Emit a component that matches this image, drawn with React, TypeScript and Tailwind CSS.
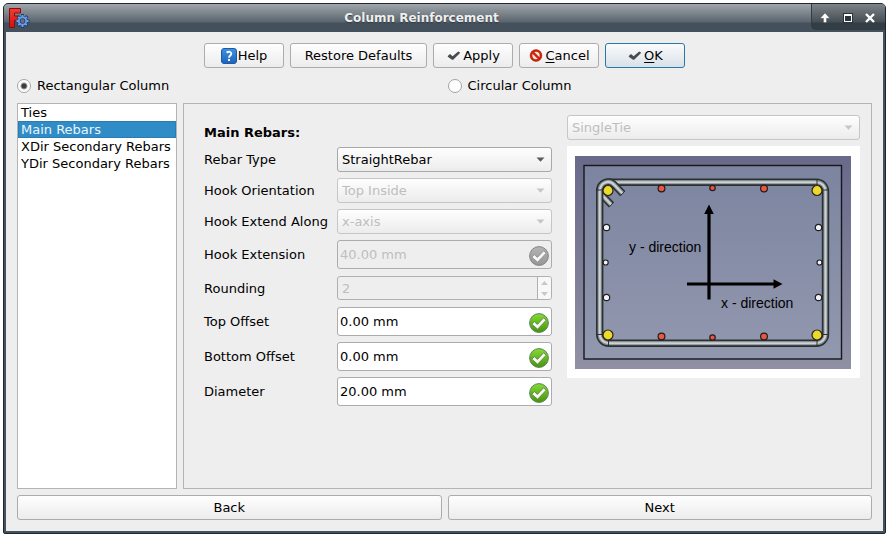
import { useState } from "react";
import type { ReactNode } from "react";

const raised = "rounded-[3px] border bg-linear-to-b from-[#fefefe] to-[#ececec]";

const gearTeeth = "M14.500 8V20M8.500 14H20.500M10.300 9.800L18.700 18.200M18.700 9.800L10.300 18.200";

function FreeCadIcon() {
  return (
    <svg className="h-[22px] w-[24px]" viewBox="0 0 24 22" aria-hidden="true">
      <defs>
        <linearGradient id="fRed" x1="0" y1="0" x2="0" y2="1">
          <stop offset="0" stopColor="#fa3a30" />
          <stop offset="1" stopColor="#d01014" />
        </linearGradient>
      </defs>
      <path d="M1.500 1.500H12.500V6H6.500V9H10.500V13.500H6.500V20.500H1.500Z" fill="url(#fRed)" stroke="#7a1214" strokeWidth="1" />
      <path d="M14.500 7V21M7.500 14H21.500M9.600 9.100L19.400 18.900M19.400 9.100L9.600 18.900" stroke="#1c3a78" strokeWidth="3" />
      <circle cx="14.500" cy="14" r="5.200" fill="#1c3a78" />
      <path d={gearTeeth} stroke="#78a8e8" strokeWidth="1.800" />
      <circle cx="14.500" cy="14" r="4.700" fill="#6a9ade" />
      <circle cx="14.500" cy="14" r="2.700" fill="#1c3a78" />
      <circle cx="14.500" cy="14" r="2" fill="#66727e" />
    </svg>
  );
}

function TickIcon() {
  return (
    <svg className="size-4" viewBox="0 0 16 16" aria-hidden="true">
      <path d="M1.800 8L4 6L6.600 8.200L12.200 3.400L13.800 4.200V5.200L7.200 11.800H6L1.800 8.800Z" fill="#484a4b" />
    </svg>
  );
}

function HelpIcon() {
  return (
    <svg className="size-4" viewBox="0 0 16 16" aria-hidden="true">
      <defs>
        <linearGradient id="helpBlue" x1="0" y1="0" x2="0" y2="1">
          <stop offset="0" stopColor="#3b92e6" />
          <stop offset="1" stopColor="#1f63b8" />
        </linearGradient>
      </defs>
      <rect x="0.500" y="0.500" width="15" height="15" rx="2.500" fill="url(#helpBlue)" stroke="#1d5aa6" />
      <path d="M5.600 4.600C7.500 3.300 10.300 3.600 10.300 5.700C10.300 7.500 8 7.600 8 9.800" fill="none" stroke="#fff" strokeWidth="1.900" />
      <rect x="7" y="11" width="2" height="2" fill="#fff" />
    </svg>
  );
}

function ForbidIcon() {
  return (
    <svg className="size-4" viewBox="0 0 16 16" aria-hidden="true">
      <circle cx="8" cy="7.500" r="4.800" fill="#f8e6e2" stroke="#cf2208" strokeWidth="2.300" />
      <path d="M4.600 4.200L11.400 10.800" stroke="#cf2208" strokeWidth="2.400" />
      <circle cx="8" cy="7.500" r="5.900" fill="none" stroke="#9a1606" strokeWidth="0.500" />
    </svg>
  );
}

function ValidIcon({ muted = false }: { muted?: boolean }) {
  const id = muted ? "validGrey" : "validGreen";
  return (
    <svg className="pointer-events-none absolute right-[3px] bottom-[3px] size-5" viewBox="0 0 20 20" aria-hidden="true">
      <defs>
        <linearGradient id={id} x1="0" y1="0" x2="0" y2="1">
          <stop offset="0" stopColor={muted ? "#b4b4b4" : "#86dc34"} />
          <stop offset="1" stopColor={muted ? "#969696" : "#479408"} />
        </linearGradient>
      </defs>
      <circle cx="10" cy="10" r="9.400" fill={`url(#${id})`} stroke={muted ? "#858585" : "#5f8263"} />
      <path d="M2.800 11.200L5.400 8.600L8.400 11.400L14.600 4.800L17.200 7.200L8.600 16.200Z" fill="#f6f6f4" stroke={muted ? "#858585" : "#4d7c34"} strokeWidth="0.800" />
    </svg>
  );
}

function DialogButton({ children, wide = false, primary = false }: { children: ReactNode; wide?: boolean; primary?: boolean }) {
  return (
    <button
      type="button"
      className={`flex h-[25px] items-center justify-center gap-px rounded-[3px] border bg-linear-to-b ${
        primary ? "border-[#2c76a6] from-[#fafbfc] to-[#d8e1e8]" : "border-[#acacac] from-[#fefefe] to-[#ececec]"
      } ${wide ? "w-[137px]" : "w-[80px]"}`}
    >
      {children}
    </button>
  );
}

function Combo({ id, value, options, disabled = false }: { id: string; value: string; options: string[]; disabled?: boolean }) {
  return (
    <div className="relative">
      <select
        id={id}
        aria-label={id === "ties" ? "Tie type" : undefined}
        defaultValue={value}
        disabled={disabled}
        className={`block h-[25px] w-full appearance-none pl-1 opacity-100 ${raised} ${
          disabled ? "border-[#c6c6c6] text-[#bebebe]" : "border-[#a8a8a8] text-black"
        }`}
      >
        {options.map((o) => (
          <option key={o}>{o}</option>
        ))}
      </select>
      <svg className="pointer-events-none absolute top-[10px] right-[7px] h-[5px] w-[9px]" viewBox="0 0 9 5" aria-hidden="true">
        <path d="M0.500 0.500H8.500L4.500 4.700Z" fill={disabled ? "#c6c6c6" : "#5a5a5a"} />
      </svg>
    </div>
  );
}

function Quantity({ id, value, disabled = false }: { id: string; value: string; disabled?: boolean }) {
  return (
    <div className="relative">
      <input
        id={id}
        type="text"
        defaultValue={value}
        disabled={disabled}
        className={`block h-[29px] w-full rounded-[3px] border border-[#acacac] pl-[2px] ${
          disabled ? "bg-[#eeeeee] text-[#bebebe]" : "bg-white text-black"
        }`}
      />
      <ValidIcon muted={disabled} />
    </div>
  );
}

function Field({ id, label, children }: { id: string; label: string; children: ReactNode }) {
  return (
    <div className="grid grid-cols-[133px_1fr] items-center">
      <label htmlFor={id}>{label}</label>
      {children}
    </div>
  );
}

function ColumnRadio({ label, checked, onChange }: { label: string; checked: boolean; onChange: () => void }) {
  return (
    <label className="flex flex-1 items-center gap-[6px]">
      <input
        type="radio"
        name="columnType"
        checked={checked}
        onChange={onChange}
        className="size-[14px] appearance-none rounded-full border border-[#a4a4a4] bg-white checked:bg-[radial-gradient(circle,#3c3c3c_2px,#ffffff_4px)]"
      />
      {label}
    </label>
  );
}

const yellow = [[33, 34.5], [242, 34.5], [33, 179], [242, 179]];
const red = [[86.5, 32.5, 3.4], [137.5, 32, 2.7], [189, 32.5, 3.4], [86.5, 180.5, 3.4], [137.5, 181.5, 2.7], [189, 180.5, 3.4]];
const white = [[31.5, 71.5, 3.2], [30.7, 106.5, 2.5], [31.5, 141.5, 3.2], [243.5, 71.5, 3.2], [244.5, 106.5, 2.5], [243.5, 141.5, 3.2]];
const tube = [
  { color: "#2a3135", width: 7.4 },
  { color: "#858c90", width: 4.2 },
  { color: "#cdd1d3", width: 2.1 },
];

function ColumnDiagram() {
  return (
    <svg className="block w-full" viewBox="0 0 276 213" role="img" aria-label="Column cross section">
      <defs>
        <linearGradient id="outer" x1="0" y1="0" x2="0" y2="1">
          <stop offset="0" stopColor="#69698a" />
          <stop offset="1" stopColor="#9090a5" />
        </linearGradient>
        <linearGradient id="inner" x1="0" y1="0" x2="0" y2="1">
          <stop offset="0" stopColor="#7c84a0" />
          <stop offset="1" stopColor="#9298ae" />
        </linearGradient>
      </defs>
      <rect width="276" height="213" fill="url(#outer)" />
      <rect x="9" y="9.500" width="257.500" height="193.500" fill="url(#inner)" stroke="#15171c" strokeWidth="1.400" />
      {tube.map((t) => (
        <path key={t.color} d="M26 38L36.300 48.700" fill="none" stroke={t.color} strokeWidth={t.width} />
      ))}
      {tube.map((t) => (
        <rect key={t.color} x="24.700" y="26.200" width="225.800" height="161" rx="9" fill="none" stroke={t.color} strokeWidth={t.width} />
      ))}
      {tube.map((t) => (
        <path key={t.color} d="M24.700 36C24.700 25.500 34.500 23.500 39.500 29L47.600 37.500" fill="none" stroke={t.color} strokeWidth={t.width} />
      ))}
      <path
        d="M21.500 34H28M242 23V30M247 34H254M21.500 178.500H28M33.500 184V190.500M242 184V190.500M247 178.500H254M45.200 40L50 35M34 51.200L38.700 46.300"
        stroke="#2b3236"
        strokeWidth="1"
      />
      {yellow.map(([x, y]) => (
        <circle key={`${x}-${y}`} cx={x} cy={y} r="5" fill="#ecd92c" stroke="#26251a" strokeWidth="1.200" />
      ))}
      {red.map(([x, y, r]) => (
        <circle key={`${x}-${y}`} cx={x} cy={y} r={r} fill="#ea5740" stroke="#221c1e" strokeWidth="1.200" />
      ))}
      {white.map(([x, y, r]) => (
        <circle key={`${x}-${y}`} cx={x} cy={y} r={r} fill="#f2f2f2" stroke="#1c1e22" strokeWidth="1.200" />
      ))}
      <path d="M134 143.500V57M112 128H199" stroke="#000" strokeWidth="3.200" />
      <path d="M134 48.500L138.800 58H129.200ZM207.500 128L198.500 123.200V132.800Z" fill="#000" />
      <g className="font-['Liberation_Sans',sans-serif] text-[14px]" fill="#000">
        <text x="54" y="96">y - direction</text>
        <text x="146" y="152">x - direction</text>
      </g>
    </svg>
  );
}

const sections = ["Ties", "Main Rebars", "XDir Secondary Rebars", "YDir Secondary Rebars"];

export default function App() {
  const [rectangular, setRectangular] = useState(true);
  const [section, setSection] = useState("Main Rebars");

  return (
    <div className="flex min-h-screen flex-col bg-white pt-[3px] pr-[2px] pb-[3px] pl-[3px] font-['DejaVu_Sans',sans-serif] text-[13px] leading-[17px] text-black">
      <div className="flex flex-1 flex-col rounded-t-[5px] rounded-b-[2px] border border-[#1f272f] bg-[#44525f]">
        <header className="flex h-[28px] rounded-t-[4px] bg-[linear-gradient(#a0a6ab_0px,#5a656e_18px,#44505c_19px,#44505c_28px)]">
          <div className="w-[28px] pt-[3px] pl-1">
            <FreeCadIcon />
          </div>
          <h1 className="flex-1 pt-[6px] text-center text-[12px] font-bold text-[#eeeeee] [text-shadow:0_1px_1px_#30383f]">Column Reinforcement</h1>
          <div className="flex h-[26px] w-[74px] items-center justify-between rounded-tr-[4px] rounded-bl-[5px] border-b border-l border-[#323c43] bg-[linear-gradient(#7d8388_0px,#454f55_18px,#333e44_19px)] pt-[2px] pr-2 pl-[6px]">
            <button type="button" aria-label="Roll up">
              <svg className="size-[14px]" viewBox="0 0 14 14" aria-hidden="true">
                <path d="M7 2L11.800 7.300H8.500V11.500H5.500V7.300H2.200Z" fill="#fff" stroke="#2a3237" strokeWidth="0.300" />
              </svg>
            </button>
            <button type="button" aria-label="Maximize">
              <svg className="size-[14px]" viewBox="0 0 14 14" aria-hidden="true">
                <rect x="2" y="2" width="10" height="10" fill="#2a3237" />
                <path d="M3 3H11V11H3ZM4 5V10H10V5Z" fill="#fff" fillRule="evenodd" />
              </svg>
            </button>
            <button type="button" aria-label="Close">
              <svg className="size-[14px]" viewBox="0 0 14 14" aria-hidden="true">
                <path d="M3 3L11 11M11 3L3 11" stroke="#fff" strokeWidth="2.400" />
              </svg>
            </button>
          </div>
        </header>

        <main className="mx-[2px] mb-[2px] flex flex-1 flex-col bg-[#eeeeee] p-[11px]">
          <div className="flex justify-center gap-[6px]">
            <DialogButton><HelpIcon />Help</DialogButton>
            <DialogButton wide>Restore Defaults</DialogButton>
            <DialogButton><TickIcon />Apply</DialogButton>
            <DialogButton>
              <ForbidIcon />
              <span><u className="underline-offset-2">C</u>ancel</span>
            </DialogButton>
            <DialogButton primary>
              <TickIcon />
              <span><u className="underline-offset-2">O</u>K</span>
            </DialogButton>
          </div>

          <div className="mt-[6px] flex h-[23px] gap-[6px]">
            <ColumnRadio label="Rectangular Column" checked={rectangular} onChange={() => setRectangular(true)} />
            <ColumnRadio label="Circular Column" checked={!rectangular} onChange={() => setRectangular(false)} />
          </div>

          <div className="mt-[6px] flex flex-1 gap-[6px]">
            <ul className="w-[160px] shrink-0 border border-[#b4b4b4] bg-white">
              {sections.map((s) => (
                <li key={s}>
                  <button
                    type="button"
                    onClick={() => setSection(s)}
                    className={`block h-[17px] w-full pl-[3px] text-left whitespace-nowrap ${
                      s === section ? "bg-[#308cc6] text-[#eaf4fa] inset-ring inset-ring-[#2a7db2]" : ""
                    }`}
                  >
                    {s}
                  </button>
                </li>
              ))}
            </ul>

            <section className="flex flex-1 items-start gap-[15px] border border-[#b4b4b4] pt-[11px] pr-[11px] pl-5">
              <form className="flex flex-1 flex-col gap-[6px] pt-[9px]">
                <h2 className="font-bold">Main Rebars:</h2>
                <Field id="rebarType" label="Rebar Type">
                  <Combo id="rebarType" value="StraightRebar" options={["StraightRebar", "LShapeRebar"]} />
                </Field>
                <Field id="hookOrientation" label="Hook Orientation">
                  <Combo id="hookOrientation" value="Top Inside" options={["Top Inside"]} disabled />
                </Field>
                <Field id="hookAlong" label="Hook Extend Along">
                  <Combo id="hookAlong" value="x-axis" options={["x-axis", "y-axis"]} disabled />
                </Field>
                <Field id="hookExtension" label="Hook Extension">
                  <Quantity id="hookExtension" value="40.00 mm" disabled />
                </Field>
                <Field id="rounding" label="Rounding">
                  <div className="my-px flex h-[24px] rounded-[3px] border border-[#b0b0b0]">
                    <input id="rounding" type="text" inputMode="numeric" defaultValue="2" disabled className="min-w-0 flex-1 bg-transparent pl-1 text-[#bebebe]" />
                    <div className="flex w-[14px] flex-col rounded-r-[2px] border-l border-[#b0b0b0] bg-[#f8f8f8]">
                      <button type="button" aria-label="Increase" disabled className="flex flex-1 items-center justify-center">
                        <svg className="h-1 w-[7px]" viewBox="0 0 7 4" aria-hidden="true"><path d="M0 4H7L3.500 0Z" fill="#c8c8c8" /></svg>
                      </button>
                      <button type="button" aria-label="Decrease" disabled className="flex flex-1 items-center justify-center">
                        <svg className="h-1 w-[7px]" viewBox="0 0 7 4" aria-hidden="true"><path d="M0 0H7L3.500 4Z" fill="#c8c8c8" /></svg>
                      </button>
                    </div>
                  </div>
                </Field>
                <Field id="topOffset" label="Top Offset">
                  <Quantity id="topOffset" value="0.00 mm" />
                </Field>
                <Field id="bottomOffset" label="Bottom Offset">
                  <Quantity id="bottomOffset" value="0.00 mm" />
                </Field>
                <Field id="diameter" label="Diameter">
                  <Quantity id="diameter" value="20.00 mm" />
                </Field>
              </form>

              <div className="flex w-[293px] shrink-0 flex-col gap-[6px]">
                <Combo id="ties" value="SingleTie" options={["SingleTie"]} disabled />
                <div className="bg-white pt-[10px] pr-[9px] pb-[9px] pl-2">
                  <ColumnDiagram />
                </div>
              </div>
            </section>
          </div>

          <div className="mt-[6px] grid grid-cols-2 gap-[6px]">
            <button type="button" className={`h-[25px] border-[#acacac] ${raised}`}>Back</button>
            <button type="button" className={`h-[25px] border-[#acacac] ${raised}`}>Next</button>
          </div>
        </main>
      </div>
    </div>
  );
}
